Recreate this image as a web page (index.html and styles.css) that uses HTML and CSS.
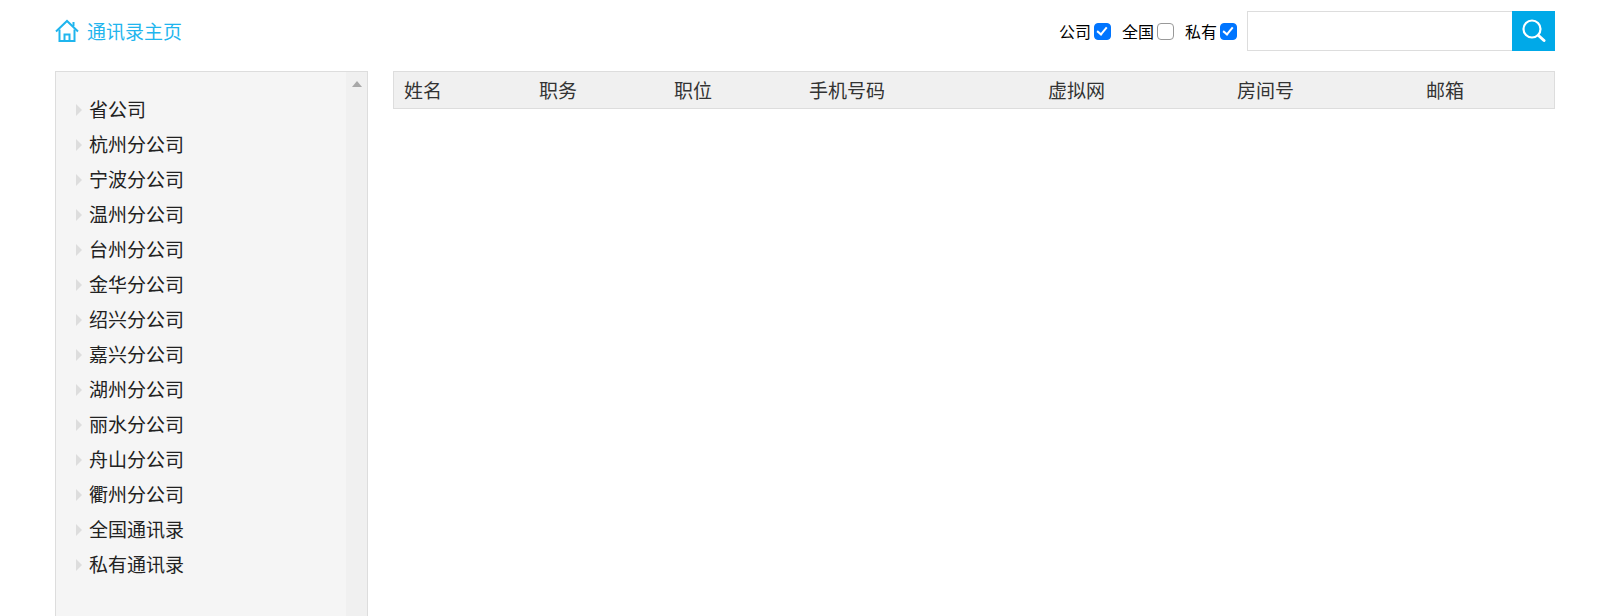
FILE: index.html
```html
<!DOCTYPE html>
<html lang="en">
<head>
    <meta charset="UTF-8">
    <meta name="viewport" content="width=device-width, initial-scale=1.0">
    <title>通讯录</title>
    <link rel="stylesheet" href="styles.css">
</head>
<body>
    <div class="header">
        <a class="home-link" href="#">
            <svg class="home-icon" viewBox="0 0 24 24" width="24" height="24" fill="none" stroke="#1fb5ee" stroke-width="2">
                <path d="M1 12.500 12 2l11 10.500"/>
                <path d="M18.500 7V3"/>
                <path d="M4.500 10.500V22h15V10.500"/>
                <path d="M9.500 22v-6.500h5V22"/>
            </svg>
            通讯录主页
        </a>
        <div class="search-area">
            <label class="scope">公司<input type="checkbox" checked></label>
            <label class="scope">全国<input type="checkbox"></label>
            <label class="scope">私有<input type="checkbox" checked></label>
            <div class="search-box">
                <input class="search-input" type="text">
                <button class="search-btn">
                    <svg viewBox="0 0 24 24" width="24" height="24" fill="none" stroke="#fff">
                        <circle cx="10" cy="10" r="8.500" stroke-width="2.200"/>
                        <path d="M16.500 16.500 22 21.500" stroke-width="3" stroke-linecap="round"/>
                    </svg>
                </button>
            </div>
        </div>
    </div>

    <div class="main">
        <div class="sidebar">
            <ul class="tree">
                <li>省公司</li>
                <li>杭州分公司</li>
                <li>宁波分公司</li>
                <li>温州分公司</li>
                <li>台州分公司</li>
                <li>金华分公司</li>
                <li>绍兴分公司</li>
                <li>嘉兴分公司</li>
                <li>湖州分公司</li>
                <li>丽水分公司</li>
                <li>舟山分公司</li>
                <li>衢州分公司</li>
                <li>全国通讯录</li>
                <li>私有通讯录</li>
            </ul>
            <div class="scrollbar"><span class="scroll-up"></span></div>
        </div>
        <div class="content">
            <div class="table-head">
                <div class="col col-name">姓名</div>
                <div class="col col-duty">职务</div>
                <div class="col col-post">职位</div>
                <div class="col col-phone">手机号码</div>
                <div class="col col-vnet">虚拟网</div>
                <div class="col col-room">房间号</div>
                <div class="col col-mail">邮箱</div>
            </div>
        </div>
    </div>
</body>
</html>
```

FILE: styles.css
```css
html, body {
    height: 100%;
    overflow: hidden;
}
body {
    margin: 0;
    background-color: #fff;
    font-family: "Microsoft YaHei", "Noto Sans CJK SC", sans-serif;
    color: #333;
}
.header {
    height: 71px;
    padding: 0 67px 10px 55px;
    display: flex;
    justify-content: space-between;
    align-items: center;
    box-sizing: border-box;
}
.home-link {
    display: flex;
    align-items: center;
    gap: 8px;
    font-size: 19px;
    color: #1fb5ee;
    text-decoration: none;
}
.search-area {
    display: flex;
    align-items: center;
}
.scope {
    display: flex;
    align-items: center;
    margin-right: 11px;
    font-size: 16px;
    color: #000;
}
.scope input {
    appearance: none;
    position: relative;
    width: 17px;
    height: 17px;
    margin: 1px 0 0 3px;
    border: 1px solid #999;
    border-radius: 4px;
    background-color: #fff;
    box-sizing: border-box;
}
.scope input:checked {
    background-color: #0075ff;
    border-color: #0075ff;
}
.scope input:checked::after {
    content: "";
    position: absolute;
    left: 4px;
    top: 1px;
    width: 4px;
    height: 8px;
    border: solid #fff;
    border-width: 0 2.500px 2.500px 0;
    transform: rotate(40deg);
}
.search-box {
    display: flex;
    margin-left: -1px;
}
.search-input {
    width: 265px;
    height: 40px;
    padding: 0 8px;
    border: 1px solid #ddd;
    border-right: none;
    box-sizing: border-box;
    outline: none;
}
.search-btn {
    width: 43px;
    height: 40px;
    padding: 0;
    background-color: #00a9e8;
    border: none;
    display: flex;
    justify-content: center;
    align-items: center;
}
.main {
    display: flex;
    gap: 25px;
    padding: 0 67px 0 55px;
}
.sidebar {
    width: 313px;
    height: 545px;
    flex-shrink: 0;
    display: flex;
    background-color: #f5f5f5;
    border: 1px solid #ddd;
    border-bottom: none;
    box-sizing: border-box;
}
.tree {
    flex: 1;
    list-style: none;
    margin: 0;
    padding: 19px 0 0 20px;
}
.tree li {
    position: relative;
    height: 35px;
    line-height: 35px;
    padding-left: 13px;
    font-size: 19px;
    color: #222;
}
.tree li::before {
    content: "";
    position: absolute;
    left: 0;
    top: 13px;
    border-left: 6px solid #ddd;
    border-top: 6px solid transparent;
    border-bottom: 6px solid transparent;
}
.scrollbar {
    width: 21px;
    background-color: #f0f0f0;
}
.scroll-up {
    display: block;
    width: 0;
    margin: 9px auto 0;
    border-left: 5px solid transparent;
    border-right: 5px solid transparent;
    border-bottom: 6px solid #a8a8a8;
}
.content {
    flex: 1;
}
.table-head {
    height: 38px;
    padding-bottom: 2px;
    display: flex;
    align-items: center;
    background-color: #f0f0f0;
    border: 1px solid #ddd;
    box-sizing: border-box;
    font-size: 19px;
}
.col {
    padding-left: 10px;
    box-sizing: border-box;
}
.col-name, .col-duty, .col-post {
    width: 135px;
}
.col-phone {
    width: 239px;
}
.col-vnet {
    width: 189px;
}
.col-room {
    width: 189px;
}
.col-mail {
    flex: 1;
}
```
